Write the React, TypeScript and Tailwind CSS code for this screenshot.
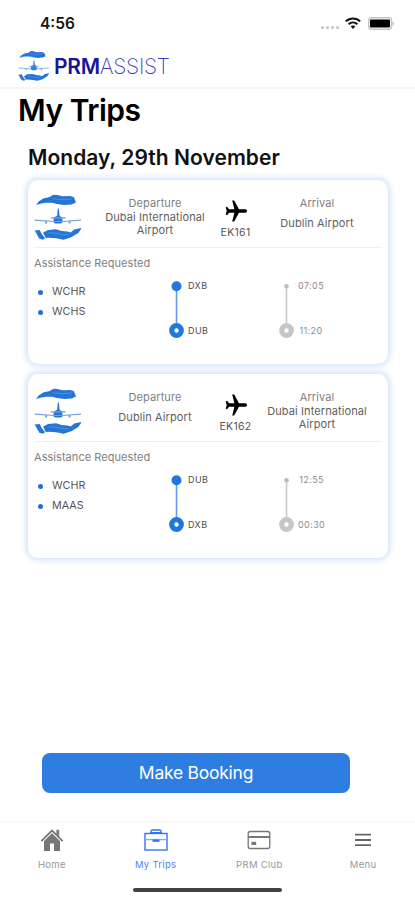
import React from "react";

function Logo({ className }: { className: string }) {
  return (
    <svg viewBox="0 0 140 140" className={className} preserveAspectRatio="none">
      <g fill="#2475d6">
        <path d="M6 36 L14 25 L29 16 L45 13 L58 5 L70 6 L84 10 L108 9 L119 13 L125 28 L112 34 L90 36 L68 33 L54 29 L35 29 L22 31 Z" />
        <path d="M2 112 L17 110 L23 122 L33 135 L27 139 L16 136 Z" />
        <path d="M27 118 L42 110 L66 108 L82 113 L100 115 L109 118 L120 109 L142 104 L132 119 L111 132 L88 139 L66 135 L45 133 L35 134 Z" />
        <path d="M71 46 L74 46 L76 68 L84 73 L85 88 L79 91 L63 91 L58 87 L59 73 L69 68 Z" />
      </g>
      <path d="M2 81 L60 85 L84 85 L140 81 M50 74 H94" fill="none" stroke="#6e9fe4" strokeWidth="3.4" />
      <path d="M36 84 V91 M106 84 V91" stroke="#6e9fe4" strokeWidth="6" />
      <path d="M56 17 Q80 22 112 18 M42 119 Q60 117 78 123 Q90 126 103 123" fill="none" stroke="#5f9de8" strokeWidth="2" />
    </svg>
  );
}

function Plane() {
  return (
    <svg viewBox="0 0 22 22" className="h-[22px] w-[22px]">
      <path
        d="M7.2 0.6 H9.2 L14 9.3 H20.2 C21.4 9.3 22 10.1 22 11 S21.4 12.7 20.2 12.7 H14 L9.2 21.4 H7.2 L9.4 12.7 H4 L2.3 15 H0.7 L1.7 11 L0.7 7 H2.3 L4 9.3 H9.4 Z"
        fill="#000"
      />
    </svg>
  );
}

function Place({ label, name, className }: { label: string; name: string; className: string }) {
  return (
    <div className={"flex flex-col items-center pt-[17px] text-center text-[11px] leading-[13px] " + className}>
      <span className="tracking-[0.1px] text-[#808080]">{label}</span>
      <span className="flex h-[27px] items-center whitespace-pre-line tracking-[0.1px] text-[#606060]">{name}</span>
    </div>
  );
}

function Track({ from, to, active }: { from: string; to: string; active?: boolean }) {
  return (
    <div className="flex h-[60px] items-center gap-[4px]">
      <svg viewBox="0 0 16 60" className="h-[60px] w-[16px]">
        <path d="M8.5 8 V46" stroke={active ? "#5f99e8" : "#c9c9c9"} strokeWidth="1.6" />
        <circle cx="8.5" cy="8.3" r={active ? 5 : 2.3} fill={active ? "#2078de" : "#bdbdbd"} />
        <circle cx="8.5" cy="52.5" r="4.8" fill="#fff" stroke={active ? "#2078de" : "#c6c6c6"} strokeWidth="5.2" />
      </svg>
      <div
        className={
          "flex h-[60px] flex-col justify-between pt-[2px] pb-[1.5px] text-[9px] leading-[12px] " +
          (active ? "tracking-[0.4px] text-[#4c4c4c]" : "items-center tracking-[0.4px] text-[#8c8c8c]")
        }
      >
        <span>{from}</span>
        <span>{to}</span>
      </div>
    </div>
  );
}

type Trip = {
  from: string;
  to: string;
  flight: string;
  needs: string[];
  codes: [string, string];
  times: [string, string];
};

const trips: Trip[] = [
  {
    from: "Dubai International\nAirport",
    to: "Dublin Airport",
    flight: "EK161",
    needs: ["WCHR", "WCHS"],
    codes: ["DXB", "DUB"],
    times: ["07:05", "11:20"],
  },
  {
    from: "Dublin Airport",
    to: "Dubai International\nAirport",
    flight: "EK162",
    needs: ["WCHR", "MAAS"],
    codes: ["DUB", "DXB"],
    times: ["12:55", "00:30"],
  },
];

function TripCard({ trip }: { trip: Trip }) {
  return (
    <article className="h-[184px] rounded-[10px] bg-white px-[6px] shadow-[0_0_6px_2px_#cfe0fa]">
      <div className="flex h-[68px] border-b-[1.5px] border-[#efefef]">
        <Logo className="mt-[13px] h-[47px] w-[47px]" />
        <Place label="Departure" name={trip.from} className="ml-[19px] w-[110px]" />
        <div className="ml-[4px] flex w-[43px] flex-col items-center pt-[20px]">
          <Plane />
          <span className="mt-[4px] text-[10.5px] leading-[13px] tracking-[0.3px] text-[#555]">{trip.flight}</span>
        </div>
        <Place label="Arrival" name={trip.to} className="ml-[5px] w-[110px]" />
      </div>
      <h3 className="mt-[8px] text-[11px] leading-[14px] tracking-[0.05px] text-[#808080]">Assistance Requested</h3>
      <div className="flex pt-[8px]">
        <ul className="w-[134px] pt-[4px]">
          {trip.needs.map((n) => (
            <li key={n} className="flex h-5 items-center gap-[9px] pl-[4px] text-[10.75px] text-[#555]">
              <span className="h-[5px] w-[5px] rounded-full bg-[#1f70d8]" />
              {n}
            </li>
          ))}
        </ul>
        <div className="w-[110px]">
          <Track from={trip.codes[0]} to={trip.codes[1]} active />
        </div>
        <Track from={trip.times[0]} to={trip.times[1]} />
      </div>
    </article>
  );
}

function Tab({ label, active, children }: { label: string; active?: boolean; children: React.ReactNode }) {
  return (
    <div className="flex flex-1 flex-col items-center">
      <div className="flex h-[26px] items-center">{children}</div>
      <span
        className={
          "mt-[6px] text-[9.5px] leading-[12px] tracking-[0.3px] " + (active ? "text-[#4c85ee]" : "text-[#979797]")
        }
      >
        {label}
      </span>
    </div>
  );
}

export default function App() {
  return (
    <div className="flex h-[900px] w-[415px] flex-col overflow-hidden bg-white font-['Inter','Liberation_Sans',sans-serif]">
      <div className="flex h-[46px] shrink-0 items-center justify-between pr-[20px] pl-[40px]">
        <span className="pt-px text-[15.5px] font-semibold text-[#151515]">4:56</span>
        <div className="flex items-center">
          <div className="mt-[8px] mr-[6px] flex gap-[2px]">
            <i className="h-[3px] w-[3px] rounded-full bg-[#c4c4c4]" />
            <i className="h-[3px] w-[3px] rounded-full bg-[#c4c4c4]" />
            <i className="h-[3px] w-[3px] rounded-full bg-[#c4c4c4]" />
            <i className="h-[3px] w-[3px] rounded-full bg-[#c4c4c4]" />
          </div>
          <svg viewBox="0 0 16 12" className="mr-[7px] h-[12px] w-[16px]">
            <g fill="none" stroke="#111" strokeWidth="2">
              <path d="M0.8 4.4 C5 0.4 11 0.4 15.2 4.4" />
              <path d="M3.6 7.3 C6.2 4.9 9.8 4.9 12.4 7.3" />
            </g>
            <path d="M5.6 9.3 Q8 7.5 10.4 9.3 L8 11.9 Z" fill="#111" />
          </svg>
          <svg viewBox="0 0 27 13" className="h-[13px] w-[27px]">
            <rect x="0.8" y="0.8" width="22.8" height="11.4" rx="3" fill="#fff" stroke="#c4c4c4" strokeWidth="1.5" />
            <rect x="2" y="2.4" width="20" height="8.2" rx="1" fill="#000" />
            <path d="M24.8 4.4 Q27 6.5 24.8 8.6 Z" fill="#aaa" />
          </svg>
        </div>
      </div>

      <header className="flex h-[43px] shrink-0 items-center border-b-2 border-[#f6f6f6] pl-[18px]">
        <Logo className="-mt-[3px] h-[31px] w-[31px]" />
        <div className="ml-[5px] flex items-center text-[21px] leading-[24px]">
          <span className="font-semibold tracking-[-0.3px] text-[#16169a]">PRM</span>
          <span className="font-extralight tracking-[-0.25px] text-[#3c3cb4]">ASSIST</span>
        </div>
      </header>

      <h1 className="mt-[3px] pl-[18px] text-[30px] leading-[36px] font-semibold tracking-[-0.5px] text-black">My Trips</h1>
      <h2 className="mt-[17px] pl-[28px] text-[21px] leading-[26px] font-semibold tracking-[0.05px] text-[#111]">
        Monday, 29th November
      </h2>

      <main className="mt-[9px] ml-[28px] flex w-[360px] flex-col gap-[10px]">
        {trips.map((t) => (
          <TripCard key={t.flight} trip={t} />
        ))}
      </main>

      <div className="mt-auto pb-[28px] pl-[42px]">
        <button className="h-[40px] w-[308px] rounded-[8px] bg-[#2e7de1] pt-px text-[17.5px] tracking-[-0.25px] text-white">
          Make Booking
        </button>
      </div>

      <nav className="flex h-[79px] shrink-0 flex-col border-t-2 border-[#fafafa]">
        <div className="flex pt-[4px]">
          <Tab label="Home">
            <svg viewBox="0 0 24 24" className="h-[24px] w-[24px]" fill="#777">
              <path d="M4 13 L12 5.2 L20 13 V23 H14 V15.5 H10 V23 H4 Z" />
              <path d="M1.3 13.2 L12 2.6 L22.7 13.2" fill="none" stroke="#777" strokeWidth="1.8" />
              <path d="M16.4 1.8 H19.2 V8.8 L16.4 6 Z" />
            </svg>
          </Tab>
          <Tab label="My Trips" active>
            <svg viewBox="0 0 24 24" className="h-[24px] w-[24px]" fill="none" stroke="#3375ee" strokeWidth="1.4">
              <rect x="1" y="5.5" width="22" height="16.5" />
              <path d="M1 11.6 H23" stroke="#85abf5" />
              <path d="M7 5.5 V3.5 Q7 2 8.5 2 H15.5 Q17 2 17 3.5 V5.5" />
              <path d="M6 5 H18" strokeWidth="2" />
              <path d="M8.5 12.6 H15.5" strokeWidth="2.4" />
            </svg>
          </Tab>
          <Tab label="PRM Club">
            <svg viewBox="0 0 24 20" className="h-[20px] w-[24px]" fill="none" stroke="#777" strokeWidth="1.3">
              <rect x="1.2" y="1.5" width="21.6" height="17" rx="2.2" />
              <path d="M1.2 7 H22.8" strokeWidth="2" />
              <path d="M4.4 13.4 H9.2" strokeWidth="3.2" />
            </svg>
          </Tab>
          <Tab label="Menu">
            <svg viewBox="0 0 18 16" className="h-[16px] w-[18px]" stroke="#666" strokeWidth="1.8">
              <path d="M1 2.7 H17 M1 8 H17 M1 13.2 H17" />
            </svg>
          </Tab>
        </div>
        <div className="mx-auto mt-[17px] h-[4px] w-[149px] rounded-full bg-[#424242]" />
      </nav>
    </div>
  );
}
